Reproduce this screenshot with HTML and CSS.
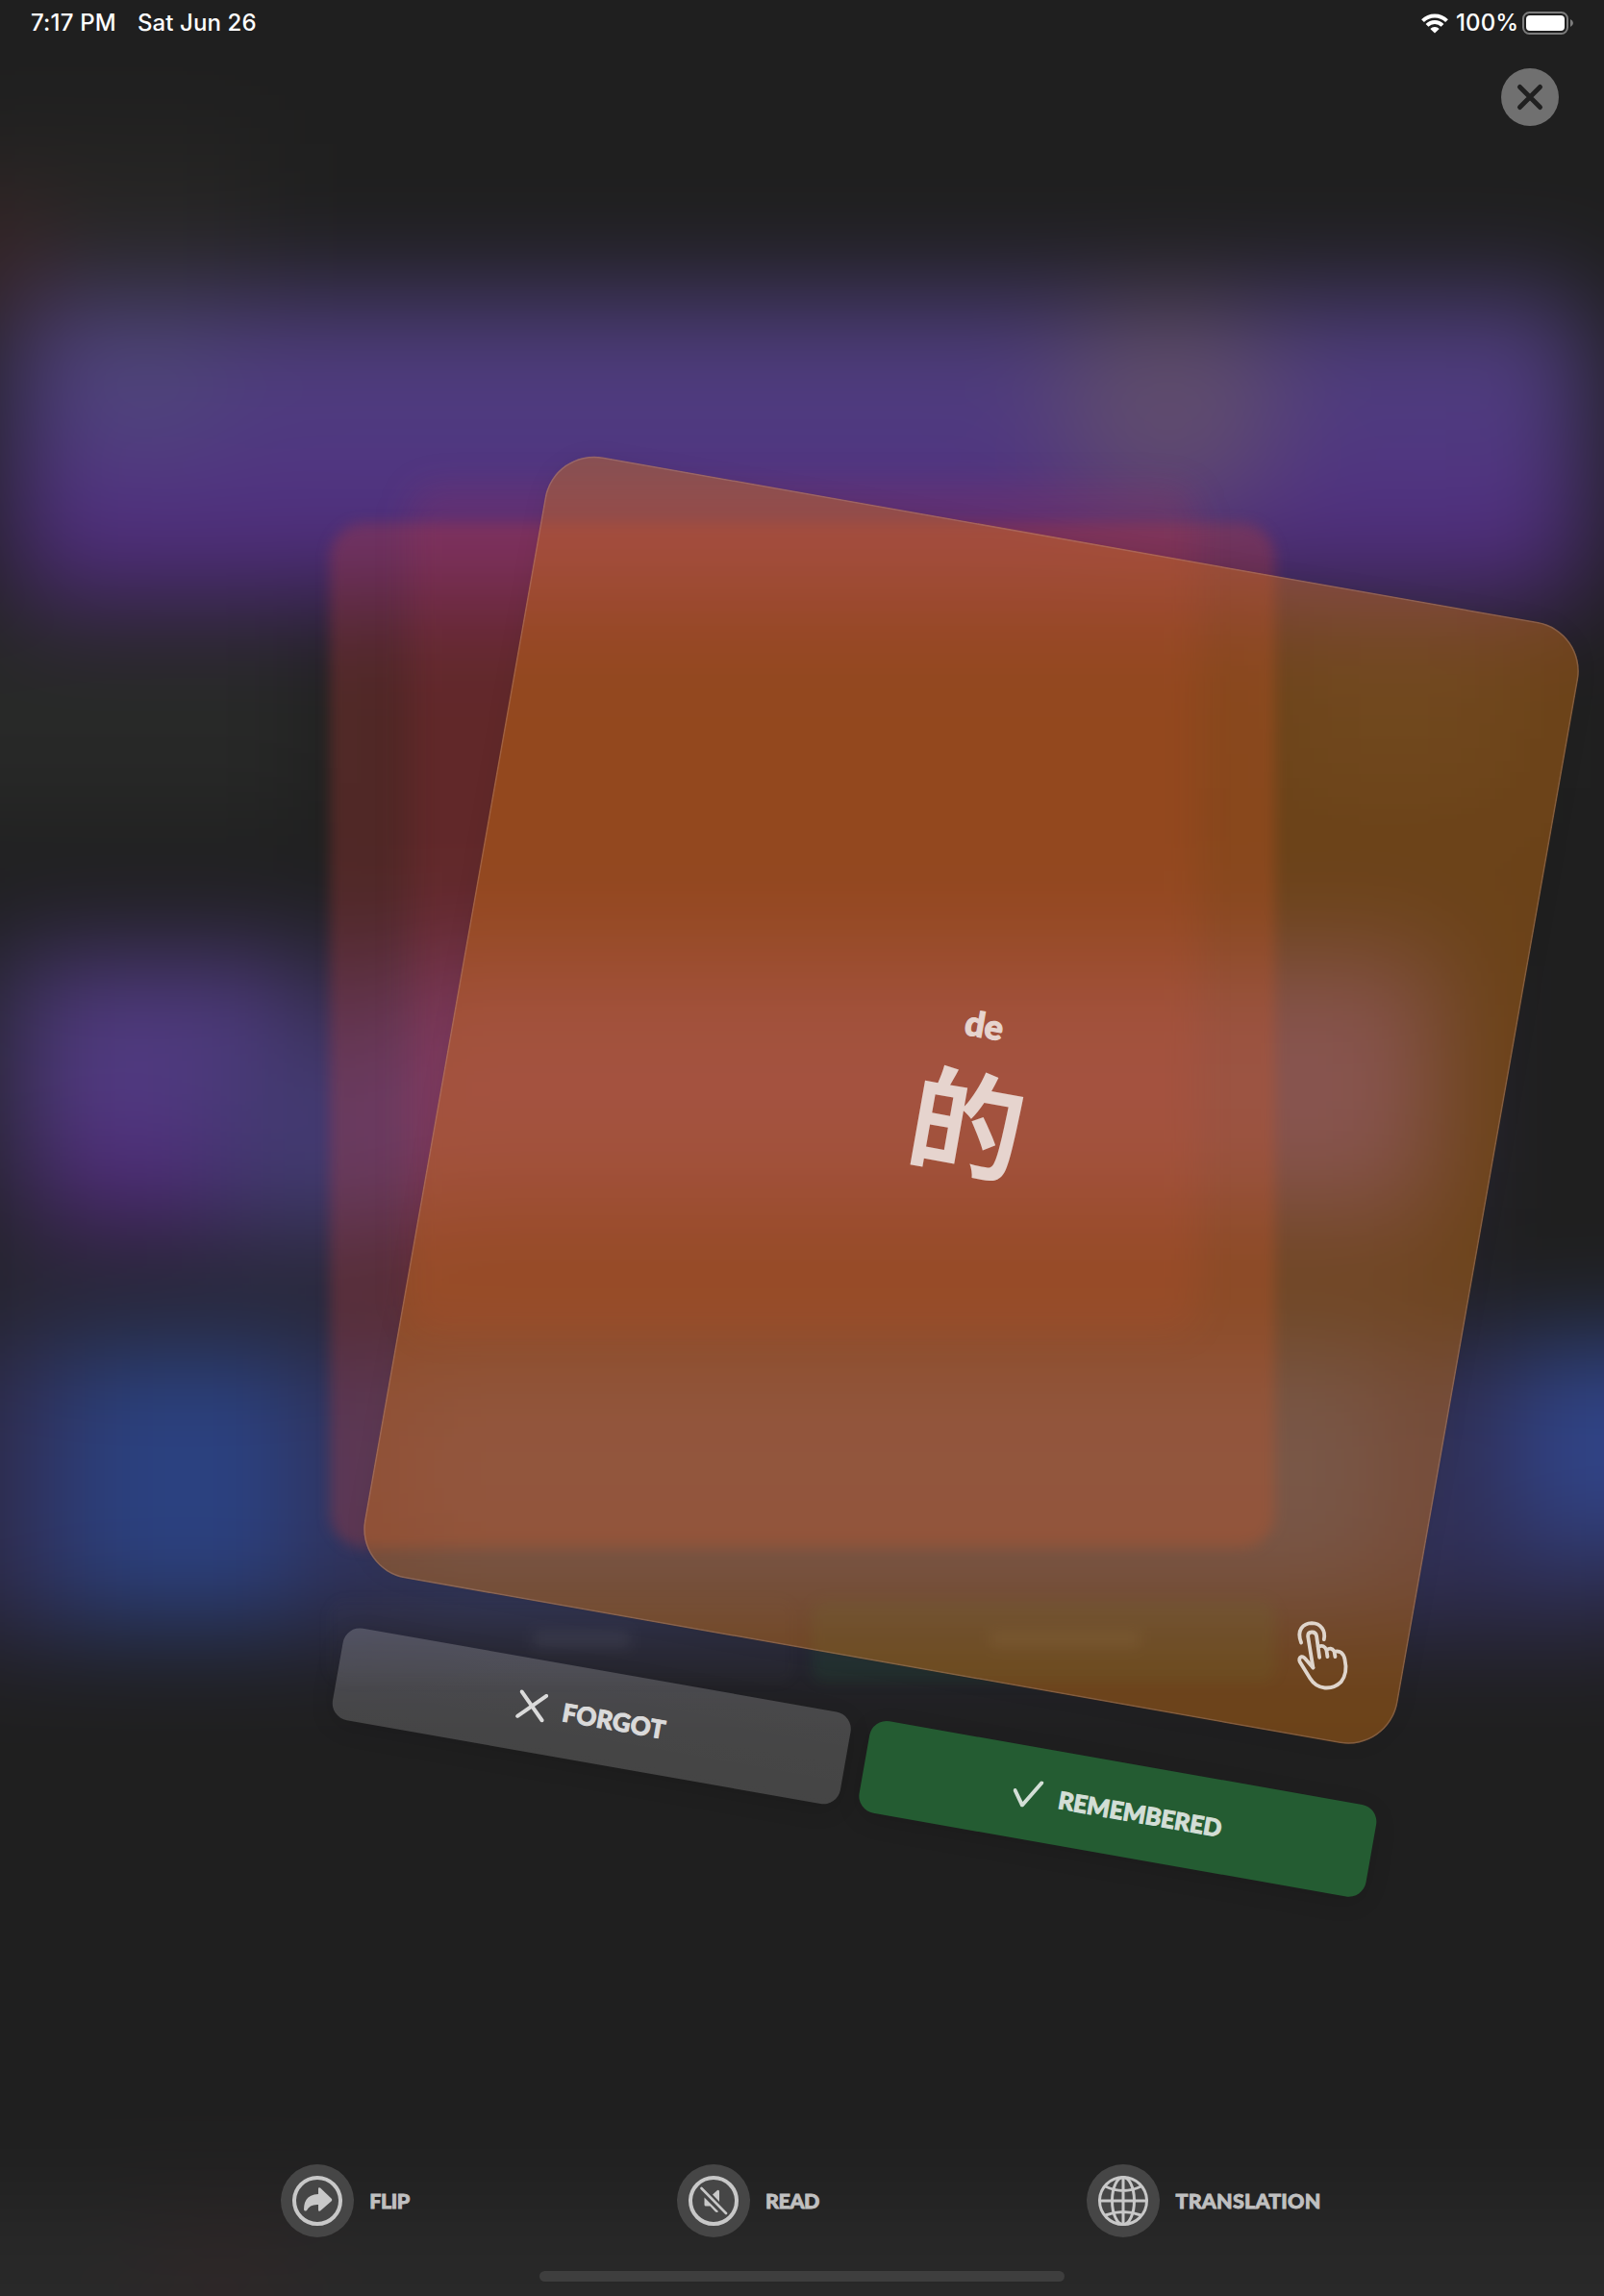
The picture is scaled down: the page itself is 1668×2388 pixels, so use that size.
FILE: index.html
```html
<!DOCTYPE html>
<html lang="en">
<head>
<meta charset="utf-8">
<title>Flashcards</title>
<link rel="stylesheet" href="styles.css">
</head>
<body>
<div class="screen">
  <svg class="backdrop" viewBox="0 0 1668 2388" aria-hidden="true">
    <defs>
      <filter id="soft" x="-50%" y="-50%" width="200%" height="200%" color-interpolation-filters="sRGB"><feGaussianBlur stdDeviation="54"/></filter>
      <filter id="mid" x="-20%" y="-20%" width="140%" height="140%" color-interpolation-filters="sRGB"><feGaussianBlur stdDeviation="17"/></filter>
      <filter id="edge" x="-20%" y="-50%" width="140%" height="200%" color-interpolation-filters="sRGB"><feGaussianBlur stdDeviation="7"/></filter>
      <linearGradient id="band" x1="0" y1="0" x2="0" y2="1">
        <stop offset="0" stop-color="#4c3f78"/><stop offset=".5" stop-color="#503982"/><stop offset="1" stop-color="#50267a"/>
      </linearGradient>
    </defs>
    <g filter="url(#soft)">
      <rect x="-200" y="-200" width="2068" height="2788" fill="#1f1f1f"/>
      <rect x="-60" y="150" width="330" height="180" fill="#272625"/>
      <circle cx="-10" cy="262" r="55" fill="#402426"/>
      <rect x="-100" y="640" width="420" height="210" fill="#282928"/>
      <rect x="1330" y="640" width="240" height="180" fill="#282928"/>
      <rect x="10" y="307" width="1642" height="318" rx="30" fill="url(#band)"/>
      <circle cx="150" cy="400" r="80" fill="#505078" opacity=".5"/>
      <circle cx="1215" cy="425" r="115" fill="#665466" opacity=".7"/>
      <rect x="-60" y="960" width="1560" height="440" fill="#2a2838" opacity=".7"/>
      <rect x="20" y="1000" width="300" height="210" fill="#503a80"/>
      <rect x="40" y="1190" width="190" height="85" fill="#502878"/>
      <rect x="225" y="1080" width="200" height="205" fill="#423a70"/>
      <rect x="400" y="1005" width="1090" height="250" fill="#4e3d7a"/>
      <rect x="-60" y="1400" width="1800" height="300" fill="#302d52"/>
      <rect x="60" y="1400" width="260" height="280" fill="#2b4180"/>
      <rect x="400" y="1405" width="1040" height="240" fill="#36426e"/>
      <rect x="1570" y="1395" width="220" height="210" fill="#304488"/>
      <rect x="-100" y="2290" width="1900" height="250" fill="#292929"/>
      <circle cx="230" cy="2370" r="70" fill="#302728"/>
    </g>
    <g filter="url(#edge)">
      <rect x="343" y="544" width="983" height="1066" rx="36" fill="#c03a36" fill-opacity=".3"/>
      <rect x="343" y="1665" width="482" height="84" rx="14" fill="#8c8c8c" fill-opacity=".04"/>
      <rect x="844" y="1665" width="482" height="84" rx="14" fill="#208040" fill-opacity=".13"/>
      <rect x="555" y="1696" width="100" height="18" fill="#fff" fill-opacity=".06"/>
      <rect x="1030" y="1696" width="155" height="18" fill="#fff" fill-opacity=".06"/>
    </g>
    <rect x="425" y="505" width="820" height="880" rx="30" fill="#c83040" fill-opacity=".15" filter="url(#mid)"/>
  </svg>

  <header class="status">
    <span class="status-time">7:17 PM</span>
    <span class="status-date">Sat Jun 26</span>
    <span class="status-right">
      <svg class="wifi" viewBox="0 0 28 21"><g fill="none" stroke="#fff" stroke-width="4"><path d="M1.5 7.6a17.8 17.8 0 0 1 25 0"/><path d="M6 12.3a11.4 11.4 0 0 1 16 0"/></g><path fill="#fff" d="M14 20.5 9.3 15.9a6.6 6.6 0 0 1 9.4 0z"/></svg>
      <span class="percent">100%</span>
      <svg class="battery" viewBox="0 0 54 24"><rect x="1" y="1" width="46" height="22" rx="6.5" fill="none" stroke="#7d7d7d" stroke-width="2"/><rect x="4" y="4" width="40" height="16" rx="4" fill="#fff"/><path d="M50 8q3 1.500 3 4t-3 4z" fill="#7d7d7d"/></svg>
    </span>
  </header>

  <button class="close" aria-label="Close"><svg viewBox="0 0 60 60"><path d="M19.500 19.500 40.500 40.500M40.500 19.500 19.500 40.500" stroke="#202020" stroke-width="5" stroke-linecap="round"/></svg></button>

  <main class="deck">
    <section class="card">
      <div class="pinyin">de</div>
      <div class="hanzi" lang="zh">的</div>
      <svg class="tap" viewBox="0 0 360 390"><g fill="none" stroke="#dfd5cc" stroke-width="11.500" stroke-linecap="round" stroke-linejoin="round"><path d="M101 148C85 108 108 88 134 87c29 0 44 25 38 51"/><path d="M138 226 122 128q0-13 12-13 13 0 15 13l9 66"/><path d="M154 161q19-9 26 11l3 20M180 172q14-12 24 3l3 17M205 176q25-6 32 24 10 44-12 71-20 20-50 18-29-2-46-29L97 208q-5-13 5-16 7-1 13 8l23 26"/></g></svg>
    </section>
    <div class="answers">
      <button class="answer forgot"><svg viewBox="0 0 30 30"><path d="M2 2 28 28M28 2 2 28"/></svg><span>FORGOT</span></button>
      <button class="answer remembered"><svg viewBox="0 0 30 30"><path d="M2 14 12 28 28 1.500"/></svg><span>REMEMBERED</span></button>
    </div>
  </main>

  <nav class="tools">
    <button class="tool flip"><span class="disc"><svg viewBox="0 0 52 52"><circle cx="26" cy="26" r="24" fill="none" stroke="#c8c8c8" stroke-width="4"/><path fill="#c8c8c8" d="M27 13.500q0-2 2-1L40.500 23.500q1.500 1.500 0 3L29 36.500q-2 1-2-1V30q-9-.5-12 6-2.500 1.500-3-1Q12 19.500 27 19z"/></svg></span><span class="label">FLIP</span></button>
    <button class="tool read"><span class="disc"><svg viewBox="0 0 52 52"><circle cx="26" cy="26" r="24" fill="none" stroke="#c8c8c8" stroke-width="4"/><path fill="#c8c8c8" d="m25 19.500 5-4.500q2-1 2 1.500V27zM16.500 22.500 31 37q-1 1.500-3 .5L22.500 31.500H18q-1.500 0-1.500-1.500z"/><path d="M13.500 13 39 39" stroke="#c8c8c8" stroke-width="2.600" stroke-linecap="round"/></svg></span><span class="label">READ</span></button>
    <button class="tool translation"><span class="disc"><svg viewBox="0 0 52 52"><g fill="none" stroke="#c8c8c8" stroke-width="3"><circle cx="26" cy="26" r="24.500"/><ellipse cx="26" cy="26" rx="11.500" ry="24.500"/><path d="M26 1.500v49M1.500 26h49M7.500 11Q26 20 44.500 11M7.500 41Q26 34 44.500 41"/></g></svg></span><span class="label">TRANSLATION</span></button>
  </nav>
  <div class="home-bar"></div>
</div>
</body>
</html>
```

FILE: styles.css
```css
* { box-sizing: border-box; }
body { margin: 0; background: #202020; }
button { border: 0; padding: 0; margin: 0; background: none; font: inherit; color: inherit; }
svg { display: block; flex: none; }

.screen {
  position: relative;
  display: flex;
  flex-direction: column;
  width: 1668px;
  height: 2388px;
  overflow: hidden;
  background: #202020;
  font-family: Lato, "Noto Sans CJK SC", sans-serif;
}
.backdrop { position: absolute; inset: 0; width: 100%; height: 100%; }
.status, .close, .deck, .tools, .home-bar { position: relative; }

.status {
  display: flex;
  align-items: center;
  height: 48px;
  padding: 0 31px 0 32px;
  color: #fff;
  font: 500 24px/48px Inter, sans-serif;
}
.status-time { width: 111px; letter-spacing: .2px; }
.status-date { letter-spacing: .1px; }
.status-right { display: flex; align-items: center; margin-left: auto; }
.wifi { width: 28px; height: 21px; margin-right: 8px; }
.percent { width: 69px; font-size: 24px; letter-spacing: .1px; }
.battery { width: 54px; height: 24px; }

.close {
  align-self: flex-end;
  width: 60px;
  height: 60px;
  margin: 23px 47px 0 0;
  border-radius: 50%;
  background: #707070;
}

.deck {
  width: 1091px;
  margin: 420px 0 0 451px;
  transform: rotate(10deg);
}
.card {
  position: relative;
  display: flex;
  flex-direction: column;
  align-items: center;
  height: 1184px;
  padding-top: 489px;
  border-radius: 52px;
  background: rgba(222, 120, 16, .4);
  box-shadow: inset 0 0 0 1.500px rgba(190, 160, 160, .28), 0 0 24px rgba(0, 0, 0, .06);
  color: #e6d4ce;
}
.pinyin { font-weight: 900; font-size: 36px; line-height: 46px; -webkit-text-stroke: 1.200px currentColor; }
.hanzi { margin-top: 5px; font: 700 119px/140px "Noto Sans CJK SC", sans-serif; }
.tap {
  position: absolute;
  right: 21px;
  bottom: 20px;
  width: 120px;
  height: 130px;
  transform: rotate(-10deg);
}

.answers { display: flex; gap: 20px; margin-top: 59px; }
.answer {
  display: flex;
  flex: 1;
  align-items: center;
  justify-content: center;
  gap: 18px;
  height: 97px;
  border-radius: 18px;
  box-shadow: 0 6px 24px rgba(0, 0, 0, .12);
  font-weight: 900;
  font-size: 26px;
  -webkit-text-stroke: 1px currentColor;
}
.answer svg { width: 30px; height: 30px; fill: none; stroke: currentColor; stroke-width: 4; stroke-linecap: round; stroke-linejoin: round; }
.forgot { background: linear-gradient(#ffffff2e, #ffffff2b); color: #dadada; letter-spacing: .2px; }
.remembered { background: #245c32; color: #d3ded6; font-size: 25px; letter-spacing: -.1px; }

.tools { display: flex; justify-content: center; gap: 278px; margin-top: 360px; padding-right: 2px; }
.tool { display: flex; align-items: center; gap: 16px; color: #c0c0c0; font-weight: 900; font-size: 21.500px; -webkit-text-stroke: .8px currentColor; }
.disc { display: grid; place-items: center; width: 76px; height: 76px; border-radius: 50%; background: #464646; }
.disc svg { width: 52px; height: 52px; }
.label { white-space: nowrap; }
.flip .label { width: 42px; letter-spacing: -.5px; }
.read .label { width: 56px; letter-spacing: -.5px; }
.translation .label { width: 152px; letter-spacing: .2px; }

.home-bar { width: 546px; height: 11px; margin: 35px 0 0 561px; border-radius: 6px; background: #3e3e3e; }
```
